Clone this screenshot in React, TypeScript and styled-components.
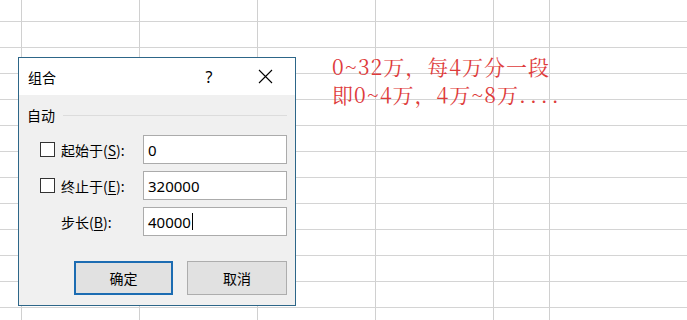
import React from "react";
import styled, { createGlobalStyle } from "styled-components";

const Global = createGlobalStyle`
  html, body { margin: 0; padding: 0; background: #fff; }
  * { box-sizing: border-box; }
`;

const Page = styled.div`
  position: relative;
  width: 687px;
  height: 320px;
  overflow: hidden;
  background: #fff;
  font-family: "Microsoft YaHei", "Noto Sans CJK SC", "Noto Sans", sans-serif;
`;

const Sheet = styled.div`
  display: grid;
  grid-template-columns: 22px 118px 118px 118px 118px 56px 1fr;
  grid-template-rows: 22px repeat(12, 26px);
`;

const Cell = styled.div<{ $last?: boolean }>`
  border-bottom: 1px solid #d4d4d4;
  border-right: ${(p) => (p.$last ? "none" : "1px solid #d0d0d0")};
`;

const Note = styled.div`
  position: absolute;
  left: 332px;
  top: 52px;
  color: #de3b3b;
  font-family: "Noto Serif CJK SC", "Liberation Serif", "Noto Sans CJK SC", serif;
  font-size: 21px;
  line-height: 28px;
  letter-spacing: 1px;
  white-space: nowrap;
`;

const Dots = styled.span`
  letter-spacing: 4px;
`;

const Dialog = styled.div`
  position: absolute;
  left: 18px;
  top: 57px;
  width: 278px;
  height: 249px;
  border: 1px solid #2d6688;
  background: #f0f0f0;
  display: flex;
  flex-direction: column;
  color: #000;
  font-size: 14px;
`;

const TitleBar = styled.div`
  height: 37px;
  background: #fff;
  display: flex;
  align-items: center;
  padding: 0 6px 0 9px;
`;

const Title = styled.div`
  flex: 1;
  font-size: 14px;
`;

const CaptionButton = styled.div<{ $w: number; $gap?: number }>`
  width: ${(p) => p.$w}px;
  height: 30px;
  margin-left: ${(p) => p.$gap ?? 0}px;
  display: flex;
  align-items: center;
  justify-content: center;
  font-family: "Noto Sans", sans-serif;
  font-size: 16px;
`;

const Body = styled.div`
  flex: 1;
  display: flex;
  flex-direction: column;
  padding: 10px 8px 10px 8px;
`;

const GroupHeader = styled.div`
  height: 20px;
  display: flex;
  align-items: center;
`;

const GroupLine = styled.div`
  flex: 1;
  height: 1px;
  background: #dcdcdc;
  margin-left: 8px;
`;

const Form = styled.div`
  margin-top: 10px;
  display: grid;
  grid-template-columns: 116px 144px;
  grid-auto-rows: 29px;
  row-gap: 7px;
`;

const LabelCell = styled.div<{ $indent: number }>`
  display: flex;
  align-items: center;
  padding-left: ${(p) => p.$indent}px;
  gap: 6px;
  white-space: nowrap;
`;

const Box = styled.div`
  width: 15px;
  height: 15px;
  border: 1px solid #333;
  background: #fff;
`;

const Key = styled.span`
  text-decoration: underline;
  text-underline-offset: 2px;
`;

const Input = styled.div`
  border: 1px solid #ababab;
  background: #fff;
  display: flex;
  align-items: center;
  padding-left: 4px;
  font-family: "Noto Sans", sans-serif;
  font-size: 15px;
`;

const Caret = styled.span`
  display: inline-block;
  width: 1px;
  height: 17px;
  background: #000;
  margin-left: 1px;
`;

const Buttons = styled.div`
  margin-top: auto;
  display: flex;
  justify-content: flex-end;
  gap: 14px;
`;

const Button = styled.div<{ $primary?: boolean }>`
  width: ${(p) => (p.$primary ? 99 : 100)}px;
  height: 34px;
  background: #e1e1e1;
  border: ${(p) => (p.$primary ? "2px solid #1c6cb2" : "1px solid #adadad")};
  display: flex;
  align-items: center;
  justify-content: center;
  font-size: 14px;
`;

const rows = [
  { check: true, text: "起始于", key: "S", value: "0" },
  { check: true, text: "终止于", key: "E", value: "320000" },
  { check: false, text: "步长", key: "B", value: "40000", caret: true },
];

export default function App() {
  const cells = [];
  for (let r = 0; r < 13; r++) {
    for (let c = 0; c < 7; c++) {
      cells.push(<Cell key={`${r}-${c}`} $last={c === 6} />);
    }
  }
  return (
    <Page>
      <Global />
      <Sheet>{cells}</Sheet>
      <Note>
        <div>0~32万，每4万分一段</div>
        <div>
          即0~4万，4万~8万<Dots>....</Dots>
        </div>
      </Note>
      <Dialog>
        <TitleBar>
          <Title>组合</Title>
          <CaptionButton $w={46}>?</CaptionButton>
          <CaptionButton $w={47} $gap={10}>
            <svg width="15" height="15" viewBox="0 0 15 15">
              <path d="M1 1 L14 14 M14 1 L1 14" stroke="#000" strokeWidth="1.1" fill="none" />
            </svg>
          </CaptionButton>
        </TitleBar>
        <Body>
          <GroupHeader>
            <span>自动</span>
            <GroupLine />
          </GroupHeader>
          <Form>
            {rows.map((r) => (
              <React.Fragment key={r.key}>
                <LabelCell $indent={r.check ? 13 : 34}>
                  {r.check && <Box />}
                  <span>
                    {r.text}(<Key>{r.key}</Key>):
                  </span>
                </LabelCell>
                <Input>
                  {r.value}
                  {r.caret && <Caret />}
                </Input>
              </React.Fragment>
            ))}
          </Form>
          <Buttons>
            <Button $primary>确定</Button>
            <Button>取消</Button>
          </Buttons>
        </Body>
      </Dialog>
    </Page>
  );
}
